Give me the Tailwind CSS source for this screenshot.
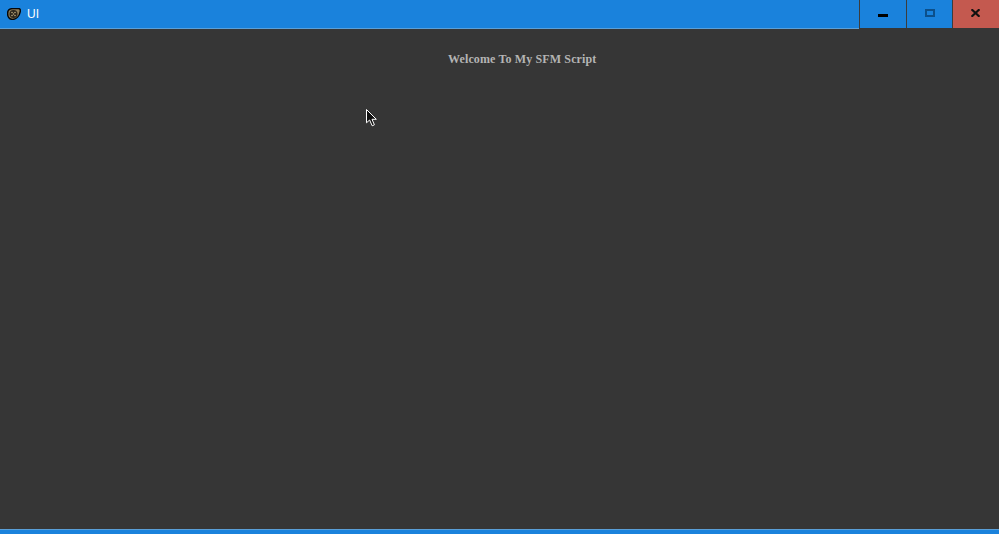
<!DOCTYPE html>
<html>
<head>
<meta charset="utf-8">
<script src="https://cdn.jsdelivr.net/npm/@tailwindcss/browser@4"></script>
</head>
<body class="m-0">
<div class="relative flex h-[534px] w-[999px] flex-col overflow-hidden bg-[#363636]">
  <header class="flex h-[29px] shrink-0 items-start bg-[#363636]">
    <div class="box-content flex h-[28px] flex-1 items-center gap-[6px] border-b border-[#5a9fd8] bg-[#1a82dc] pl-[7px]">
      <svg width="14" height="12" viewBox="0 0 14 12" class="shrink-0">
        <path d="M0.600 5.500 C0.600 2.500 2.500 0.600 6 0.600 L11.500 0.600 C13.300 0.600 13.600 2 13.200 3.800 C12.400 7.800 9.500 11.400 5.500 11.400 C2.500 11.400 0.600 8.800 0.600 5.500 Z" fill="#8f7d58" stroke="#060606" stroke-width="1.500"/>
        <circle cx="6.500" cy="6" r="4" fill="#2c261c"/>
        <circle cx="5" cy="4.500" r="0.800" fill="#b8a67c"/>
        <circle cx="8" cy="4.500" r="0.800" fill="#b8a67c"/>
        <circle cx="6.500" cy="6" r="0.800" fill="#b8a67c"/>
        <circle cx="5" cy="7.500" r="0.800" fill="#b8a67c"/>
        <circle cx="8" cy="7.500" r="0.800" fill="#b8a67c"/>
      </svg>
      <span class="font-['Liberation_Sans',sans-serif] text-[12px] leading-none text-white">UI</span>
    </div>
    <div class="flex h-[28px] w-[47px] items-center justify-center border-l border-[#3c3c3c] bg-[#1a82dc]">
      <span class="mt-[3px] h-[3px] w-[10px] bg-black"></span>
    </div>
    <div class="flex h-[28px] w-[46px] items-center justify-center border-l border-[#3c3c3c] bg-[#1a82dc]">
      <span class="mt-[-3px] h-[8px] w-[10px] border-2 border-[#0c4f8a]"></span>
    </div>
    <div class="flex h-[28px] w-[47px] items-center justify-center border-l border-[#3c3c3c] bg-[#c4594f]">
      <svg width="9" height="8" viewBox="0 0 9 8" class="mt-[-3px] mr-[1px]"><path d="M0.500 0.300 L8.500 7.700 M8.500 0.300 L0.500 7.700" stroke="#111" stroke-width="2.200"/></svg>
    </div>
  </header>
  <main class="flex-1 pl-[448px] pt-[21px]">
    <p class="font-['Liberation_Serif',serif] text-[12px] leading-[18px] font-bold tracking-[0.13px] text-[#b4b4b4]">Welcome To My SFM Script</p>
  </main>
  <footer class="h-[5px] shrink-0 border-t border-[#5a9fd8] bg-[#1a82dc]"></footer>
  <svg width="12" height="18" viewBox="0 0 12 18" class="absolute left-[366px] top-[109px]">
    <path d="M0.500 0.500 L0.500 13.800 L3.600 11 L6.200 16.800 L8.400 15.800 L6 10.300 L10.300 10.300 Z" fill="#111" stroke="#fff" stroke-width="1"/>
  </svg>
</div>
</body>
</html>
